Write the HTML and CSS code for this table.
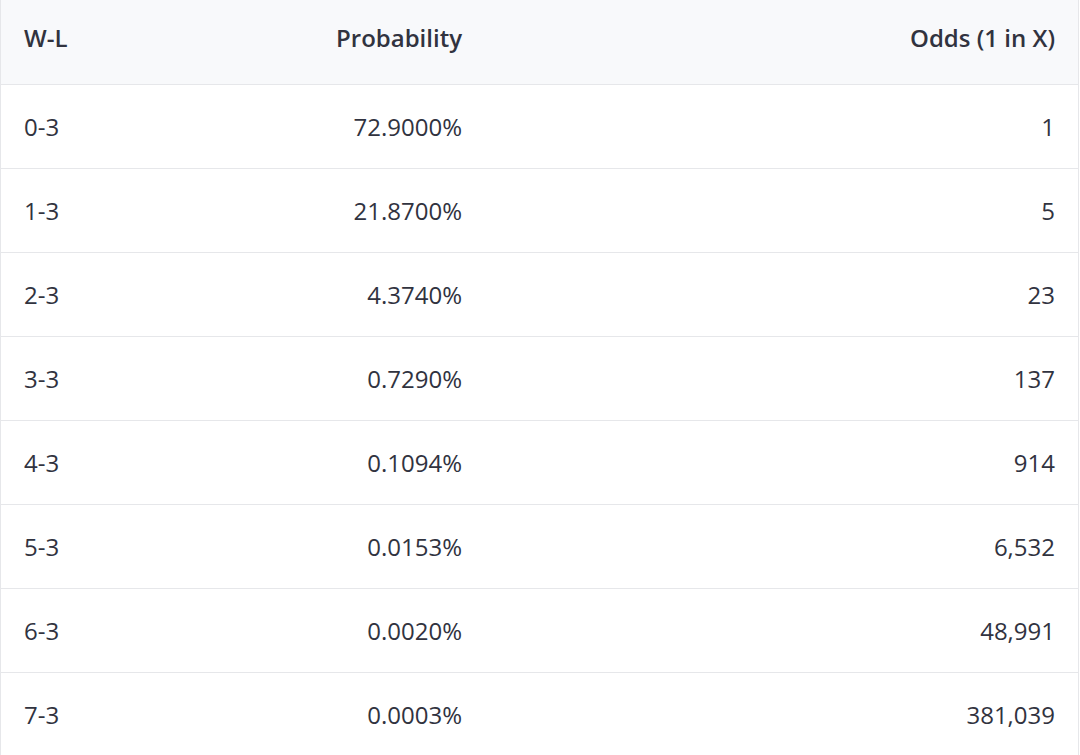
FILE: index.html
```html
<!DOCTYPE html>
<html>
<head>
<meta charset="utf-8">
<link rel="stylesheet" href="styles.css">
</head>
<body>
<table class="odds">
  <thead>
    <tr><th class="wl">W-L</th><th class="num prob">Probability</th><th class="num">Odds (1 in X)</th></tr>
  </thead>
  <tbody>
    <tr><td class="wl">0-3</td><td class="num prob">72.9000%</td><td class="num">1</td></tr>
    <tr><td class="wl">1-3</td><td class="num prob">21.8700%</td><td class="num">5</td></tr>
    <tr><td class="wl">2-3</td><td class="num prob">4.3740%</td><td class="num">23</td></tr>
    <tr><td class="wl">3-3</td><td class="num prob">0.7290%</td><td class="num">137</td></tr>
    <tr><td class="wl">4-3</td><td class="num prob">0.1094%</td><td class="num">914</td></tr>
    <tr><td class="wl">5-3</td><td class="num prob">0.0153%</td><td class="num">6,532</td></tr>
    <tr><td class="wl">6-3</td><td class="num prob">0.0020%</td><td class="num">48,991</td></tr>
    <tr><td class="wl">7-3</td><td class="num prob">0.0003%</td><td class="num">381,039</td></tr>
  </tbody>
</table>
</body>
</html>
```

FILE: styles.css
```css
html, body {
  margin: 0;
  padding: 0;
  background: #ffffff;
  overflow: hidden;
}
body {
  font-family: "Open Sans", "Noto Sans", sans-serif;
  color: #31333f;
}
.odds {
  width: 1079px;
  border-collapse: collapse;
  border-left: 1px solid #e6e7ea;
  border-right: 1px solid #e6e7ea;
  table-layout: fixed;
}
.odds th, .odds td {
  padding: 0 23px 0 23px;
  border-bottom: 1px solid #e6e7ea;
  font-size: 24px;
  line-height: 1;
  white-space: nowrap;
}
.odds th {
  background: #f8f9fb;
  font-weight: 600;
  padding-bottom: 8px;
  height: 76px;
}
.odds td {
  font-weight: 400;
  padding-top: 1px;
  height: 82px;
}
.wl { text-align: left; width: 140px; }
.num { text-align: right; }
.prob { width: 252px; }
```
